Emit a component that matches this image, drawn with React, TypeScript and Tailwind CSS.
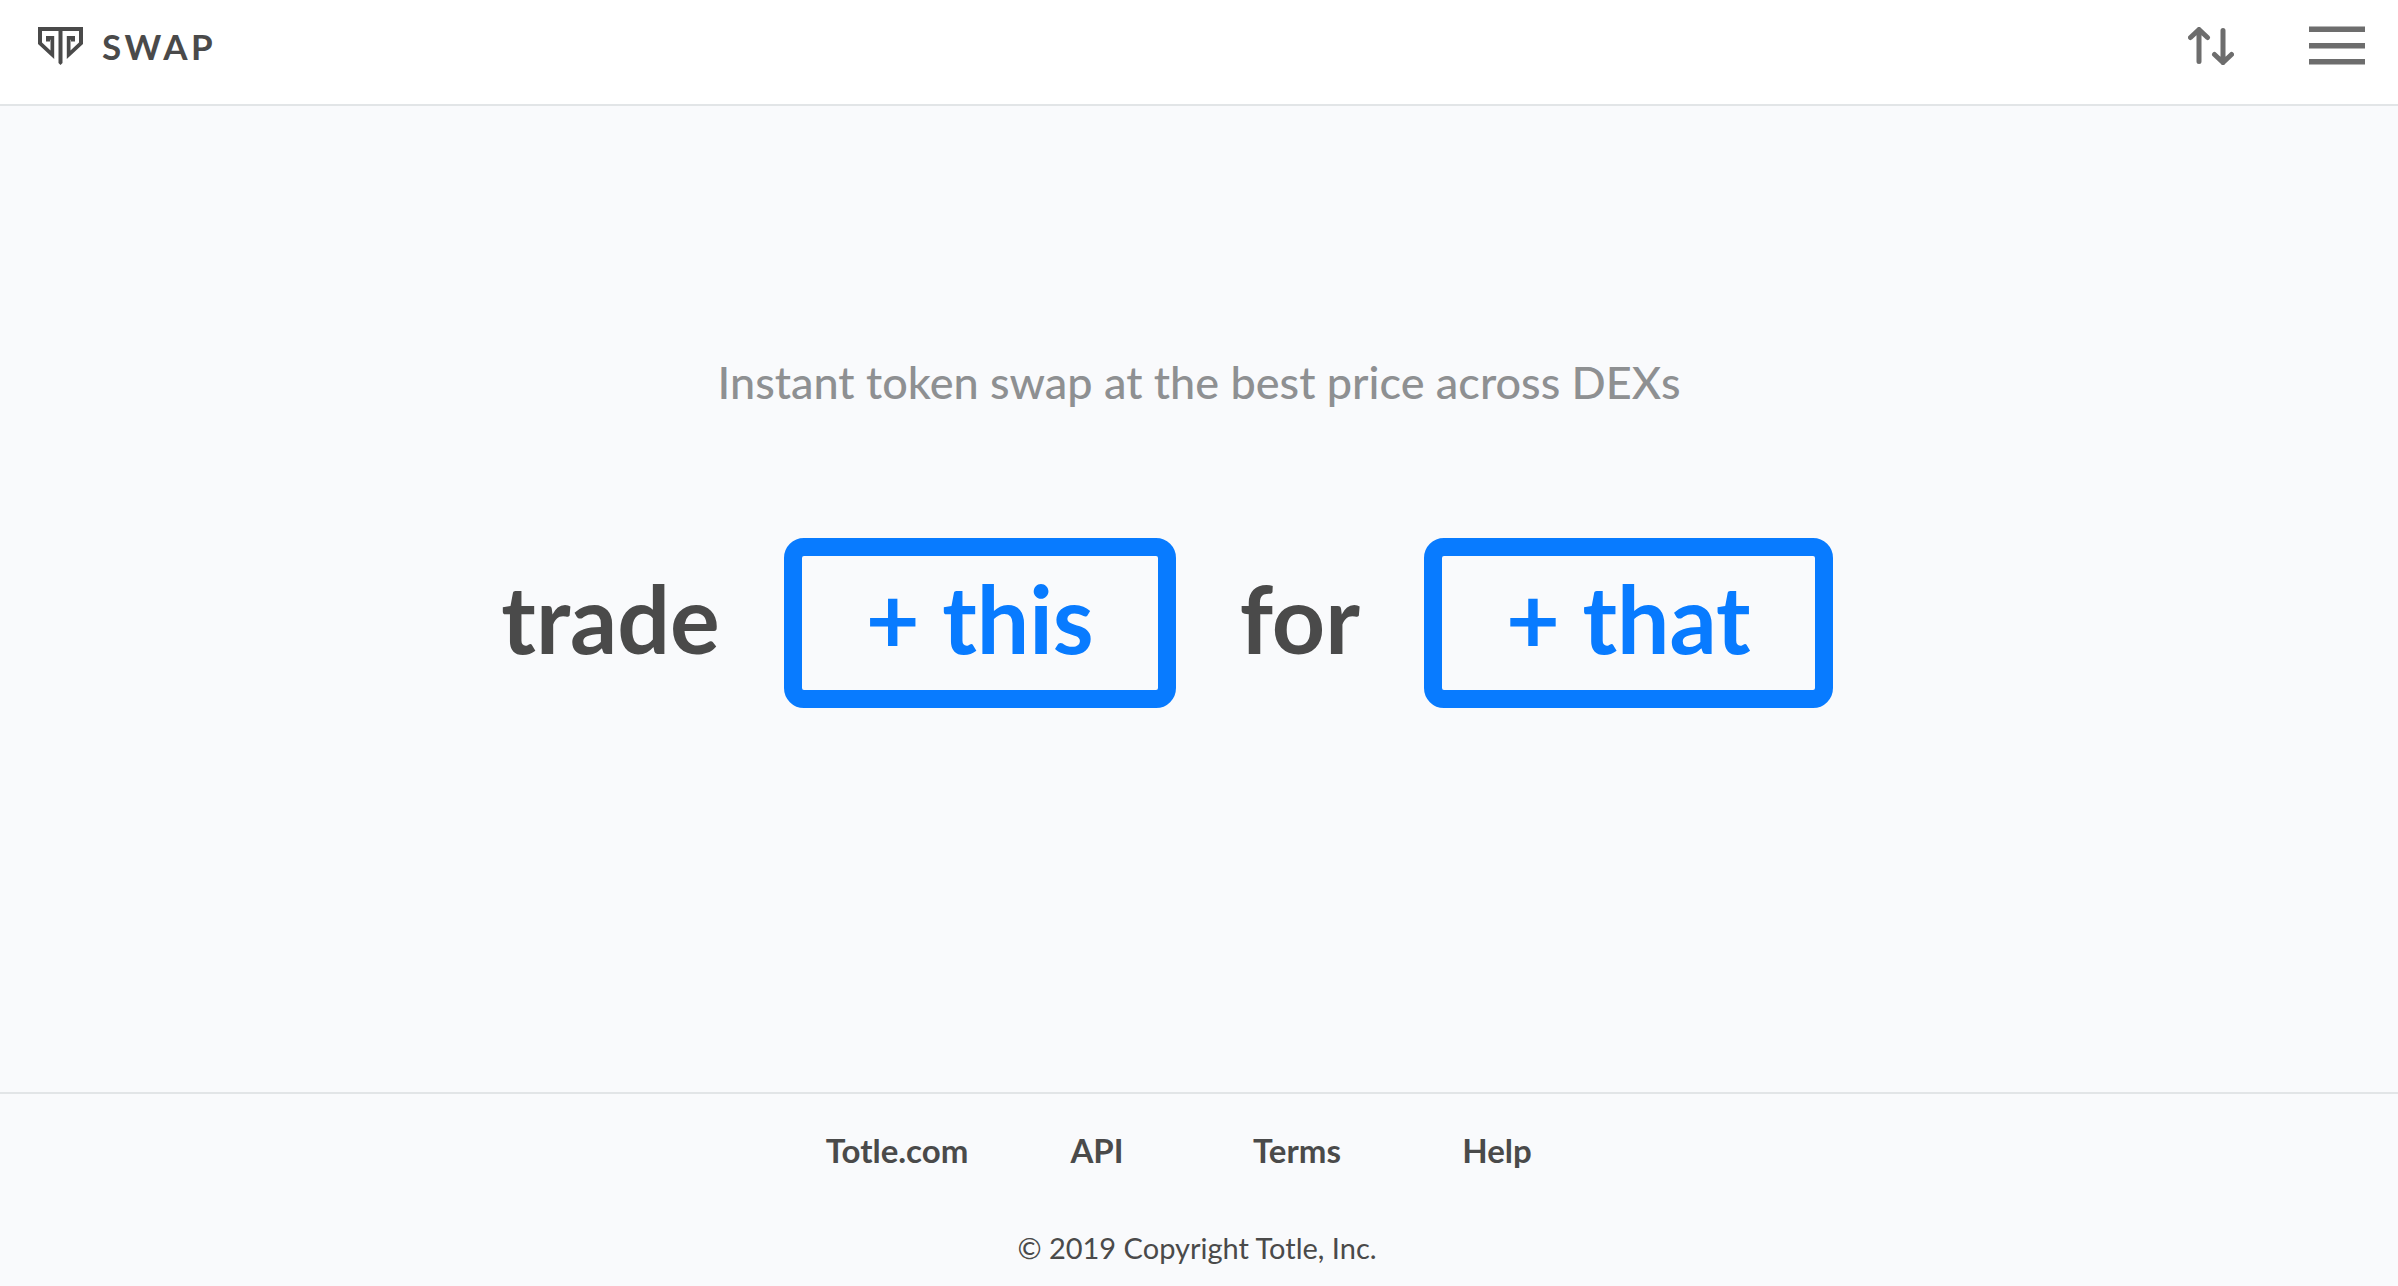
import React from 'react';

const LINKS = ['Totle.com', 'API', 'Terms', 'Help'];

function Logo() {
  return (
    <svg width="45" height="38" viewBox="0 0 45 38" fill="#4a4a4a" aria-hidden="true">
      <path d="M0 0H45V17L28.800 32V9H37V14.500H33V12.800H32.500V23.500L41 15.500V4H24.500V36L22.500 38L20.500 36V4H4V15.500L12.500 23.500V12.800H12V14.500H8V9H16.200V32L0 17Z" />
    </svg>
  );
}

function SwapButton({ label }: { label: string }) {
  return (
    <button type="button" className="mr-16 h-[170px] rounded-[20px] border-[18px] border-[#087bff] px-16 pb-2.5 font-bold text-[#087bff]">
      {label}
    </button>
  );
}

export default function App() {
  return (
    <div className="flex min-h-screen flex-col bg-[#f9fafc] font-['Lato',sans-serif] text-[#4a4a4a]">
      <header className="flex h-[106px] items-center justify-between border-b-2 border-[#e2e5e7] bg-white pr-[33px] pb-3 pl-[38px]">
        <a href="#" className="flex items-center gap-[19px]">
          <Logo />
          <span className="text-[35px] leading-10 font-bold tracking-widest">SWAP</span>
        </a>
        <div className="flex items-center gap-[75px]">
          <button type="button" aria-label="Transactions">
            <svg width="46" height="38" viewBox="0 0 46 38" fill="none" stroke="#6d6d6d" strokeWidth="5" strokeLinecap="round" strokeLinejoin="round">
              <path d="M11 34.500V2.500M2.500 10.500L11 2.500L19.500 10.500" />
              <path d="M35 3.500V35.500M26.500 27.500L35 35.500L43.500 27.500" />
            </svg>
          </button>
          <button type="button" aria-label="Menu">
            <svg width="56" height="40" viewBox="0 0 56 40" fill="#6d6d6d">
              <path d="M0 0.500H56V6H0ZM0 17H56V22.500H0ZM0 33H56V38.500H0Z" />
            </svg>
          </button>
        </div>
      </header>

      <main className="flex grow flex-col items-center pt-[248px]">
        <h1 className="text-[45px] leading-[56px] font-medium text-[#8e9092]">Instant token swap at the best price across DEXs</h1>
        <div className="mt-[128px] flex items-center text-[93px] leading-[120px] font-bold">
          <span className="mr-16 pb-2.5">trade</span>
          <SwapButton label="+ this" />
          <span className="mr-16 pb-2.5">for</span>
          <SwapButton label="+ that" />
        </div>
      </main>

      <footer className="flex flex-col items-center border-t-2 border-[#e2e5e7] pt-9 pr-1 pb-[18px]">
        <nav className="grid grid-cols-4 text-center text-[33px] leading-10 font-bold">
          {LINKS.map((link) => (
            <a key={link} href="#" className="w-[200px]">
              {link}
            </a>
          ))}
        </nav>
        <p className="mt-[58px] text-[29px] leading-10">© 2019 Copyright Totle, Inc.</p>
      </footer>
    </div>
  );
}
